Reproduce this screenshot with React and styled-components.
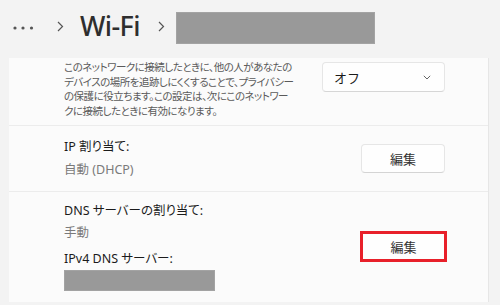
import React from "react";
import styled, { createGlobalStyle } from "styled-components";

const Global = createGlobalStyle`
  html, body { margin: 0; padding: 0; background: #f3f3f3; }
  body {
    width: 500px; height: 305px; overflow: hidden;
    font-family: "Segoe UI", "Noto Sans", "Noto Sans CJK JP", sans-serif;
    color: #1b1b1b;
  }
`;

const Page = styled.div`
  width: 500px;
  height: 305px;
  display: flex;
  flex-direction: column;
  background: #f3f3f3;
`;

const Breadcrumb = styled.div`
  height: 58px;
  display: flex;
  align-items: center;
  padding-left: 12px;
  box-sizing: border-box;
  padding-bottom: 6px;
`;

const Dots = styled.svg`
  width: 24px;
  height: 6px;
  margin-right: 20px;
  margin-top: 4px;
`;

const Chevron = styled.svg`
  width: 8px;
  height: 11px;
  margin-right: ${(p) => p.$mr}px;
`;

const Title = styled.span`
  font-family: "Segoe UI", "Noto Sans", sans-serif;
  font-weight: 500;
  font-size: 27px;
  line-height: 32px;
  color: #2e2e2e;
  margin-right: 17px;
  letter-spacing: -0.6px;
`;

const Redacted = styled.div`
  width: ${(p) => p.$w}px;
  height: ${(p) => p.$h}px;
  background: #999999;
  box-shadow: inset 0 0 0 1px #a3a3a3;
  margin-top: ${(p) => p.$mt || 0}px;
`;

const Card = styled.div`
  margin-left: 9px;
  width: 479px;
  background: #fbfbfb;
  border-right: 1px solid #e6e6e6;
  display: flex;
  flex-direction: column;
`;

const Section = styled.div`
  display: flex;
  justify-content: space-between;
  align-items: ${(p) => p.$align || "center"};
  padding: ${(p) => p.$pad};
  border-bottom: ${(p) => (p.$last ? "none" : "1px solid #ececec")};
`;

const Description = styled.p`
  margin: 0;
  font-family: "Noto Sans CJK JP", sans-serif;
  font-feature-settings: "palt";
  font-size: 10.5px;
  line-height: 14.5px;
  color: #5a5a5a;
  white-space: nowrap;
  letter-spacing: -0.5px;
  padding-top: 2px;
`;

const Stack = styled.div`
  display: flex;
  flex-direction: column;
`;

const Label = styled.div`
  font-family: "Segoe UI", "Noto Sans", "Noto Sans CJK JP", sans-serif;
  font-feature-settings: "palt";
  font-size: 12.5px;
  line-height: 20px;
  color: #1b1b1b;
  margin-top: ${(p) => p.$mt || 0}px;
`;

const Value = styled(Label)`
  color: #7a7a7a;
`;

const Dropdown = styled.div`
  margin-top: 4px;
  width: 123px;
  height: 30px;
  box-sizing: border-box;
  background: #fefefe;
  border: 1px solid #e6e6e6;
  border-bottom-color: #d6d6d6;
  border-radius: 4px;
  display: flex;
  align-items: center;
  justify-content: space-between;
  padding: 0 13px 0 11px;
  font-family: "Noto Sans CJK JP", sans-serif;
  font-size: 13px;
  color: #1b1b1b;
`;

const SmallChevron = styled.svg`
  width: 8px;
  height: 5px;
`;

const Button = styled.div`
  width: ${(p) => (p.$highlight ? 87 : 84)}px;
  height: ${(p) => (p.$highlight ? 31 : 29)}px;
  box-sizing: border-box;
  background: #fefefe;
  border: ${(p) => (p.$highlight ? "3px solid #e8202a" : "1px solid #e6e6e6")};
  border-bottom-color: ${(p) => (p.$highlight ? "#e8202a" : "#d4d4d4")};
  border-radius: ${(p) => (p.$highlight ? 0 : 4)}px;
  display: flex;
  align-items: center;
  justify-content: center;
  font-family: "Noto Sans CJK JP", sans-serif;
  font-size: 13px;
  color: #333;
  margin-right: ${(p) => (p.$highlight ? -2 : 0)}px;
`;

export default function App() {
  return (
    <Page>
      <Global />
      <Breadcrumb>
        <Dots viewBox="0 0 24 6">
          <circle cx="3" cy="3" r="1.6" fill="#555" />
          <circle cx="11" cy="3" r="1.6" fill="#555" />
          <circle cx="19.5" cy="3" r="1.6" fill="#555" />
        </Dots>
        <Chevron viewBox="0 0 8 11" $mr={16}>
          <path d="M2 1 L6.5 5.5 L2 10" fill="none" stroke="#555" strokeWidth="1.2" />
        </Chevron>
        <Title>Wi-Fi</Title>
        <Chevron viewBox="0 0 8 11" $mr={11}>
          <path d="M2 1 L6.5 5.5 L2 10" fill="none" stroke="#555" strokeWidth="1.2" />
        </Chevron>
        <Redacted $w={199} $h={32} $mt={4} />
      </Breadcrumb>
      <Card>
        <Section $align="flex-start" $pad="0 43px 7px 55px">
          <Description>
            このネットワークに接続したときに、他の人があなたの
            <br />
            デバイスの場所を追跡しにくくすることで、プライバシー
            <br />
            の保護に役立ちます。この設定は、次にこのネットワー
            <br />
            クに接続したときに有効になります。
          </Description>
          <Dropdown>
            <span>オフ</span>
            <SmallChevron viewBox="0 0 8 5">
              <path d="M0.8 0.8 L4 4 L7.2 0.8" fill="none" stroke="#666" strokeWidth="1" />
            </SmallChevron>
          </Dropdown>
        </Section>
        <Section $pad="11px 43px 11px 55px">
          <Stack>
            <Label>IP 割り当て:</Label>
            <Value $mt={3}>自動 (DHCP)</Value>
          </Stack>
          <Button>編集</Button>
        </Section>
        <Section $last $pad="9px 43px 11px 55px">
          <Stack>
            <Label>DNS サーバーの割り当て:</Label>
            <Value $mt={2}>手動</Value>
            <Label $mt={6}>IPv4 DNS サーバー:</Label>
            <Redacted $w={151} $h={21} $mt={1} />
          </Stack>
          <Button $highlight>編集</Button>
        </Section>
      </Card>
    </Page>
  );
}
